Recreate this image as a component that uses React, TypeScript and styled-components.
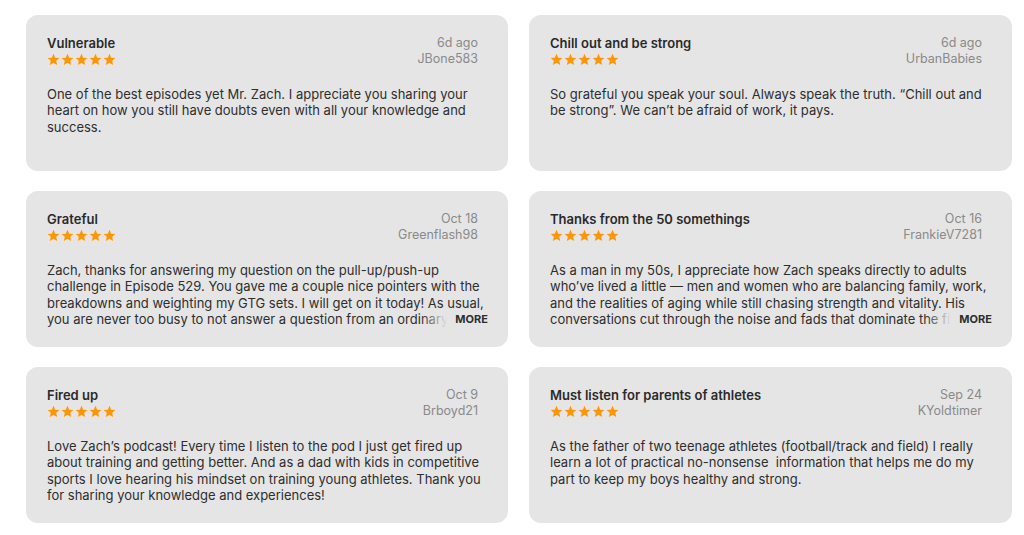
import styled, { createGlobalStyle } from "styled-components";

const GlobalStyle = createGlobalStyle`
  body {
    margin: 0;
    background: #ffffff;
    font-family: Inter, "Liberation Sans", Arial, sans-serif;
    -webkit-font-smoothing: antialiased;
  }
`;

const Grid = styled.div`
  display: grid;
  grid-template-columns: 482px 483px;
  grid-auto-rows: 156px;
  column-gap: 21px;
  row-gap: 20px;
  padding: 15px 0 0 26px;
`;

const Card = styled.div`
  background: #e5e5e5;
  border-radius: 12px;
  padding: 20px 20px 0 21px;
  overflow: hidden;
`;

const Header = styled.div`
  display: flex;
  justify-content: space-between;
  padding-right: 10px;
`;

const TitleCol = styled.div`
  display: flex;
  flex-direction: column;
`;

const Title = styled.div`
  font-size: 13px;
  line-height: 16px;
  font-weight: 600;
  color: #2a2a2a;
`;

const Stars = styled.div`
  display: flex;
  gap: 1px;
  height: 16px;
  align-items: center;
`;

const MetaCol = styled.div`
  display: flex;
  flex-direction: column;
  align-items: flex-end;
  font-size: 12.5px;
  line-height: 16px;
  color: #8a8a8a;
`;

const Body = styled.div`
  position: relative;
  margin-top: 19px;
  font-size: 13px;
  line-height: 16.3px;
  color: #2e2e2e;
  max-height: 65px;
  overflow: hidden;
`;

const More = styled.span`
  position: absolute;
  right: 0;
  bottom: 0;
  padding-left: 34px;
  font-size: 11px;
  line-height: 16px;
  font-weight: 700;
  color: #2e2e2e;
  background: linear-gradient(
    to right,
    rgba(229, 229, 229, 0) 0,
    #e5e5e5 26px
  );
`;

function Star() {
  return (
    <svg width="13" height="13" viewBox="0 0 24 24">
      <path
        fill="#ff9500"
        d="M12 1.5l3.1 7.1 7.7.7-5.8 5.1 1.7 7.6L12 18l-6.7 4 1.7-7.6-5.8-5.1 7.7-.7z"
      />
    </svg>
  );
}

type Review = {
  title: string;
  date: string;
  user: string;
  text: string;
  more?: boolean;
};

const reviews: Review[] = [
  {
    title: "Vulnerable",
    date: "6d ago",
    user: "JBone583",
    text: "One of the best episodes yet Mr. Zach. I appreciate you sharing your heart on how you still have doubts even with all your knowledge and success.",
  },
  {
    title: "Chill out and be strong",
    date: "6d ago",
    user: "UrbanBabies",
    text: "So grateful you speak your soul. Always speak the truth. \u201cChill out and be strong\u201d. We can\u2019t be afraid of work, it pays.",
  },
  {
    title: "Grateful",
    date: "Oct 18",
    user: "Greenflash98",
    text: "Zach, thanks for answering my question on the pull-up/push-up challenge in Episode 529. You gave me a couple nice pointers with the breakdowns and weighting my GTG sets. I will get on it today! As usual, you are never too busy to not answer a question from an ordinary guy like me. Thank you for all you do.",
    more: true,
  },
  {
    title: "Thanks from the 50 somethings",
    date: "Oct 16",
    user: "FrankieV7281",
    text: "As a man in my 50s, I appreciate how Zach speaks directly to adults who\u2019ve lived a little \u2014 men and women who are balancing family, work, and the realities of aging while still chasing strength and vitality. His conversations cut through the noise and fads that dominate the fitness world and get to what really matters.",
    more: true,
  },
  {
    title: "Fired up",
    date: "Oct 9",
    user: "Brboyd21",
    text: "Love Zach\u2019s podcast! Every time I listen to the pod I just get fired up about training and getting better. And as a dad with kids in competitive sports I love hearing his mindset on training young athletes. Thank you for sharing your knowledge and experiences!",
  },
  {
    title: "Must listen for parents of athletes",
    date: "Sep 24",
    user: "KYoldtimer",
    text: "As the father of two teenage athletes (football/track and field) I really learn a lot of practical no-nonsense\u00a0 information that helps me do my part to keep my boys healthy and strong.",
  },
];

export default function App() {
  return (
    <>
      <GlobalStyle />
      <Grid>
        {reviews.map((r) => (
          <Card key={r.title}>
            <Header>
              <TitleCol>
                <Title>{r.title}</Title>
                <Stars>
                  {[0, 1, 2, 3, 4].map((i) => (
                    <Star key={i} />
                  ))}
                </Stars>
              </TitleCol>
              <MetaCol>
                <span>{r.date}</span>
                <span>{r.user}</span>
              </MetaCol>
            </Header>
            <Body>
              {r.text}
              {r.more && <More>MORE</More>}
            </Body>
          </Card>
        ))}
      </Grid>
    </>
  );
}
